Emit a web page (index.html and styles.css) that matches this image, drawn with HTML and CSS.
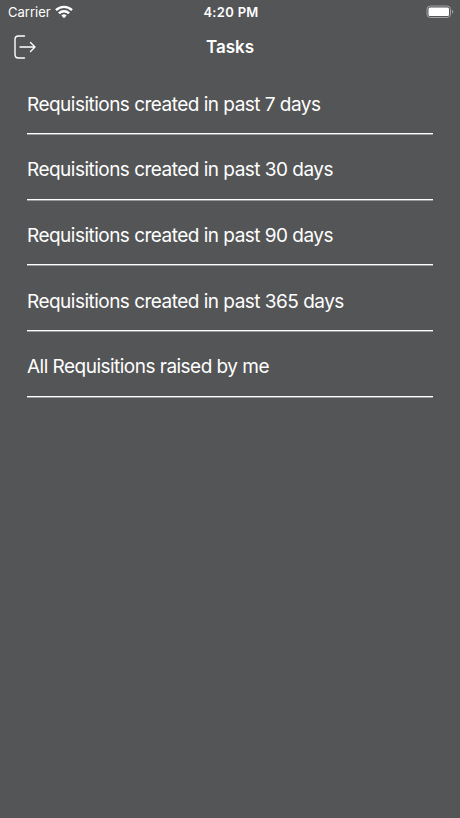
FILE: index.html
```html
<!DOCTYPE html>
<html lang="en">
<head>
<meta charset="utf-8">
<title>Tasks</title>
<link rel="stylesheet" href="styles.css">
</head>
<body>
<div class="status">
  <div class="carrier"><span class="carrier-name">Carrier</span>
    <svg class="wifi" width="18" height="14" viewBox="0 0 18 14" fill="none" stroke="#fff" stroke-width="2.4"><path d="M1 5.2a11.400 11.400 0 0 1 16 0M3.900 8.400a7.300 7.300 0 0 1 10.200 0"/><path d="M9 13.200 6.300 10.500a3.900 3.900 0 0 1 5.400 0z" fill="#fff" stroke="none"/></svg>
  </div>
  <time class="clock">4:20 PM</time>
  <svg class="battery" width="28" height="14" viewBox="0 0 28 14"><rect x="1" y="1" width="23.500" height="11.500" rx="3.300" fill="none" stroke="#a0a1a2"/><rect x="2.500" y="2.500" width="20.500" height="8.500" rx="1.500" fill="#fff"/><path d="M26 4.800c1.700.6 1.700 3.400 0 4z" fill="#a0a1a2"/></svg>
</div>
<header class="nav">
  <svg class="logout" width="24" height="26" viewBox="0 0 24 26" fill="none" stroke="#fff" stroke-width="1.400" stroke-linecap="round" stroke-linejoin="round"><path d="M10.500 2H4.500Q1 2 1 5.500v15Q1 24 4.500 24h6M6 13H21M16.500 8.500 21 13l-4.500 4.500"/></svg>
  <h1 class="title">Tasks</h1>
</header>
<ul class="tasks">
  <li class="task"><span class="label">Requisitions created in past 7 days</span></li>
  <li class="task"><span class="label">Requisitions created in past 30 days</span></li>
  <li class="task"><span class="label">Requisitions created in past 90 days</span></li>
  <li class="task"><span class="label">Requisitions created in past 365 days</span></li>
  <li class="task"><span class="label">All Requisitions raised by me</span></li>
</ul>
</body>
</html>
```
FILE: styles.css
```css
* { box-sizing: border-box; }
body { margin: 0; min-height: 818px; background: #545556; color: #fff; font-family: Inter, sans-serif; }
.status { display: grid; grid-template-columns: 1fr auto 1fr; align-items: center; height: 24px; padding: 0 6px 0 8px; font-size: 13px; }
.carrier { display: flex; align-items: center; gap: 5px; }
.wifi { margin-left: -1px; }
.clock { font-weight: 600; letter-spacing: 0.300px; }
.battery { justify-self: end; }
.nav { display: grid; grid-template-columns: 1fr auto 1fr; align-items: center; height: 46px; padding: 0 14px; }
.title { margin: 0; font-size: 17px; font-weight: 600; }
.tasks { list-style: none; margin: 0; padding: 0 27px; }
.task { display: flex; align-items: center; height: 65.600px; padding-top: 7px; border-bottom: 1px solid #fff; box-shadow: 0 1px #989999; }
.task:first-child { height: 64.200px; padding-top: 5px; }
.label { font-size: 19px; letter-spacing: -0.520px; white-space: nowrap; }
```
